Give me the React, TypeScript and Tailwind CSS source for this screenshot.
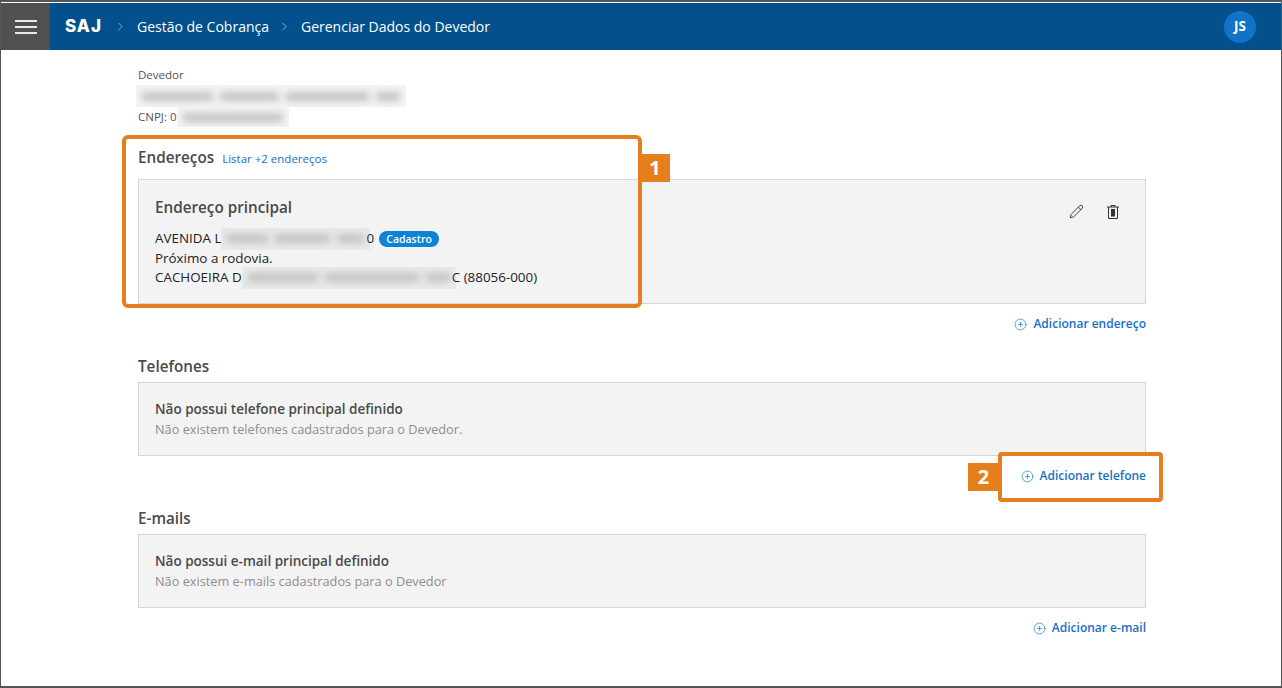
import React from 'react';
import { ChevronRight, CirclePlus, Pencil } from 'lucide-react';

const font = { fontFamily: '"Open Sans", "Noto Sans", sans-serif' };

const AddLink = ({ label }: { label: string }) => (
  <div className="flex justify-end h-[40px] items-center">
    <a className="flex items-center gap-[6px] text-[12px] font-semibold text-[#1a6fc4]">
      <CirclePlus size={13} strokeWidth={1.4} className="text-[#2488d8]" />
      {label}
    </a>
  </div>
);

// pale patch with smeared words inside, where the original data was hidden
const Blur = ({ w, h = 'h-[22px]', bg = 'bg-[#e9e9e9]', parts = [1] }: { w: string; h?: string; bg?: string; parts?: number[] }) => (
  <span className={`inline-flex items-center gap-[7px] shrink-0 overflow-hidden px-[6px] -my-[2px] ${bg} ${w} ${h}`}>
    {parts.map((p, i) => (
      <span key={i} style={{ flexGrow: p }} className="block h-[9px] bg-[#c4c4c4] blur-[3.5px]" />
    ))}
  </span>
);

const EmptyCard = ({ title, text }: { title: string; text: string }) => (
  <div className="h-[74px] bg-[#f3f3f3] border border-[#d6d6d6] px-4 pt-[17px]">
    <div className="text-[13.5px] font-semibold leading-[18px] text-[#4a4a4a]">{title}</div>
    <div className="text-[12.75px] leading-[22px] text-[#8e8e8e]">{text}</div>
  </div>
);

export default function App() {
  return (
    <div style={font} className="relative h-[688px] w-[1282px] overflow-hidden bg-white border-x border-[#555] border-t-2 border-b-2 pt-px">
      {/* Header */}
      <header className="h-[47px] bg-[#03508c] flex items-center text-white">
        <button className="w-[49px] h-full bg-[#505050] flex flex-col items-center justify-center gap-[4px]">
          <span className="block w-[22px] h-[2px] bg-[#e8e8e8]" />
          <span className="block w-[22px] h-[2px] bg-[#e8e8e8]" />
          <span className="block w-[22px] h-[2px] bg-[#e8e8e8]" />
        </button>
        <span style={{ fontFamily: 'Inter, sans-serif' }} className="ml-[15px] w-[37px] text-[17px] font-extrabold tracking-[1px]">SAJ</span>
        <ChevronRight size={13} strokeWidth={1.5} className="ml-[12px] text-[#a9c4da]" />
        <span className="ml-[10px] text-[14px]">Gestão de Cobrança</span>
        <ChevronRight size={13} strokeWidth={1.5} className="ml-[9px] text-[#a9c4da]" />
        <span className="ml-[10px] text-[14px]">Gerenciar Dados do Devedor</span>
        <div className="ml-auto mr-[25px] w-8 h-8 rounded-full bg-[#0f74c8] flex items-center justify-center text-[13.5px] font-bold">JS</div>
      </header>

      {/* Content */}
      <main className="w-[1008px] ml-[137px] pt-[16px]">
        <div className="text-[11.5px] leading-[18px] text-[#555]">Devedor</div>
        <div className="h-[24px] flex items-center -ml-[2px]"><Blur w="w-[270px]" bg="bg-[#f4f4f4]" parts={[6, 5, 7, 2]} /></div>
        <div className="text-[11.5px] leading-[18px] text-[#555] flex items-center">CNPJ: 0<Blur w="w-[112px]" h="h-[20px]" bg="bg-[#f4f4f4]" /></div>

        <div className="mt-[20px] flex items-baseline gap-2 h-[33px]">
          <h2 className="text-[15.25px] font-semibold text-[#4a4a4a]">Endereços</h2>
          <a className="text-[11.5px] text-[#1a6fc4]">Listar +2 endereços</a>
        </div>
        <div className="h-[125px] bg-[#f3f3f3] border border-[#d6d6d6] px-4 pt-[16px] flex justify-between">
          <div>
            <div className="text-[15.25px] font-semibold leading-[22px] text-[#4a4a4a]">Endereço principal</div>
            <div className="mt-[11px] text-[13.4px] leading-[19.5px] text-[#222]">
              <div className="flex items-center">
                AVENIDA L<Blur w="w-[149px]" parts={[3, 4, 2]} /><span className="-ml-[4px]">0</span>
                <span className="ml-[5px] w-[60px] text-center h-4 rounded-full bg-[#0a84d6] text-white text-[10.5px] font-semibold leading-4">Cadastro</span>
              </div>
              <div>Próximo a rodovia.</div>
              <div className="flex items-center">
                CACHOEIRA D<Blur w="w-[214px]" parts={[3, 4, 1]} /><span className="-ml-[4px]">C (88056-000)</span>
              </div>
            </div>
          </div>
          <div className="flex gap-[22px] pt-[8px] pr-[9px] text-[#333]">
            <Pencil size={15} strokeWidth={1.5} />
            <svg width="14" height="16" viewBox="0 0 14 16" fill="none" stroke="currentColor" strokeWidth="1">
              <path d="M1 3h12M5 3V1.5h4V3M2.5 3v11.5h9V3" />
              <rect x="5" y="5" width="4" height="7.5" fill="currentColor" stroke="none" />
            </svg>
          </div>
        </div>
        <AddLink label="Adicionar endereço" />

        <h2 className="h-[38px] text-[15.25px] font-semibold leading-[44px] text-[#4a4a4a]">Telefones</h2>
        <EmptyCard title="Não possui telefone principal definido" text="Não existem telefones cadastrados para o Devedor." />
        <AddLink label="Adicionar telefone" />

        <h2 className="h-[38px] text-[15.25px] font-semibold leading-[44px] text-[#4a4a4a]">E-mails</h2>
        <EmptyCard title="Não possui e-mail principal definido" text="Não existem e-mails cadastrados para o Devedor" />
        <AddLink label="Adicionar e-mail" />
      </main>

      {/* Annotations */}
      <div className="absolute left-[121px] top-[133px] w-[520px] h-[173px] border-[4px] border-[#e67e1e] rounded-[6px]" />
      <div className="absolute left-[639px] top-[152px] w-[30px] h-[28px] bg-[#e67e1e] text-white text-[20px] font-bold flex items-center justify-center">1</div>
      <div className="absolute left-[997px] top-[450px] w-[165px] h-[50px] border-[4px] border-[#e67e1e] rounded-[4px]" />
      <div className="absolute left-[967px] top-[461px] w-[31px] h-[28px] bg-[#e67e1e] text-white text-[20px] font-bold flex items-center justify-center">2</div>
    </div>
  );
}
